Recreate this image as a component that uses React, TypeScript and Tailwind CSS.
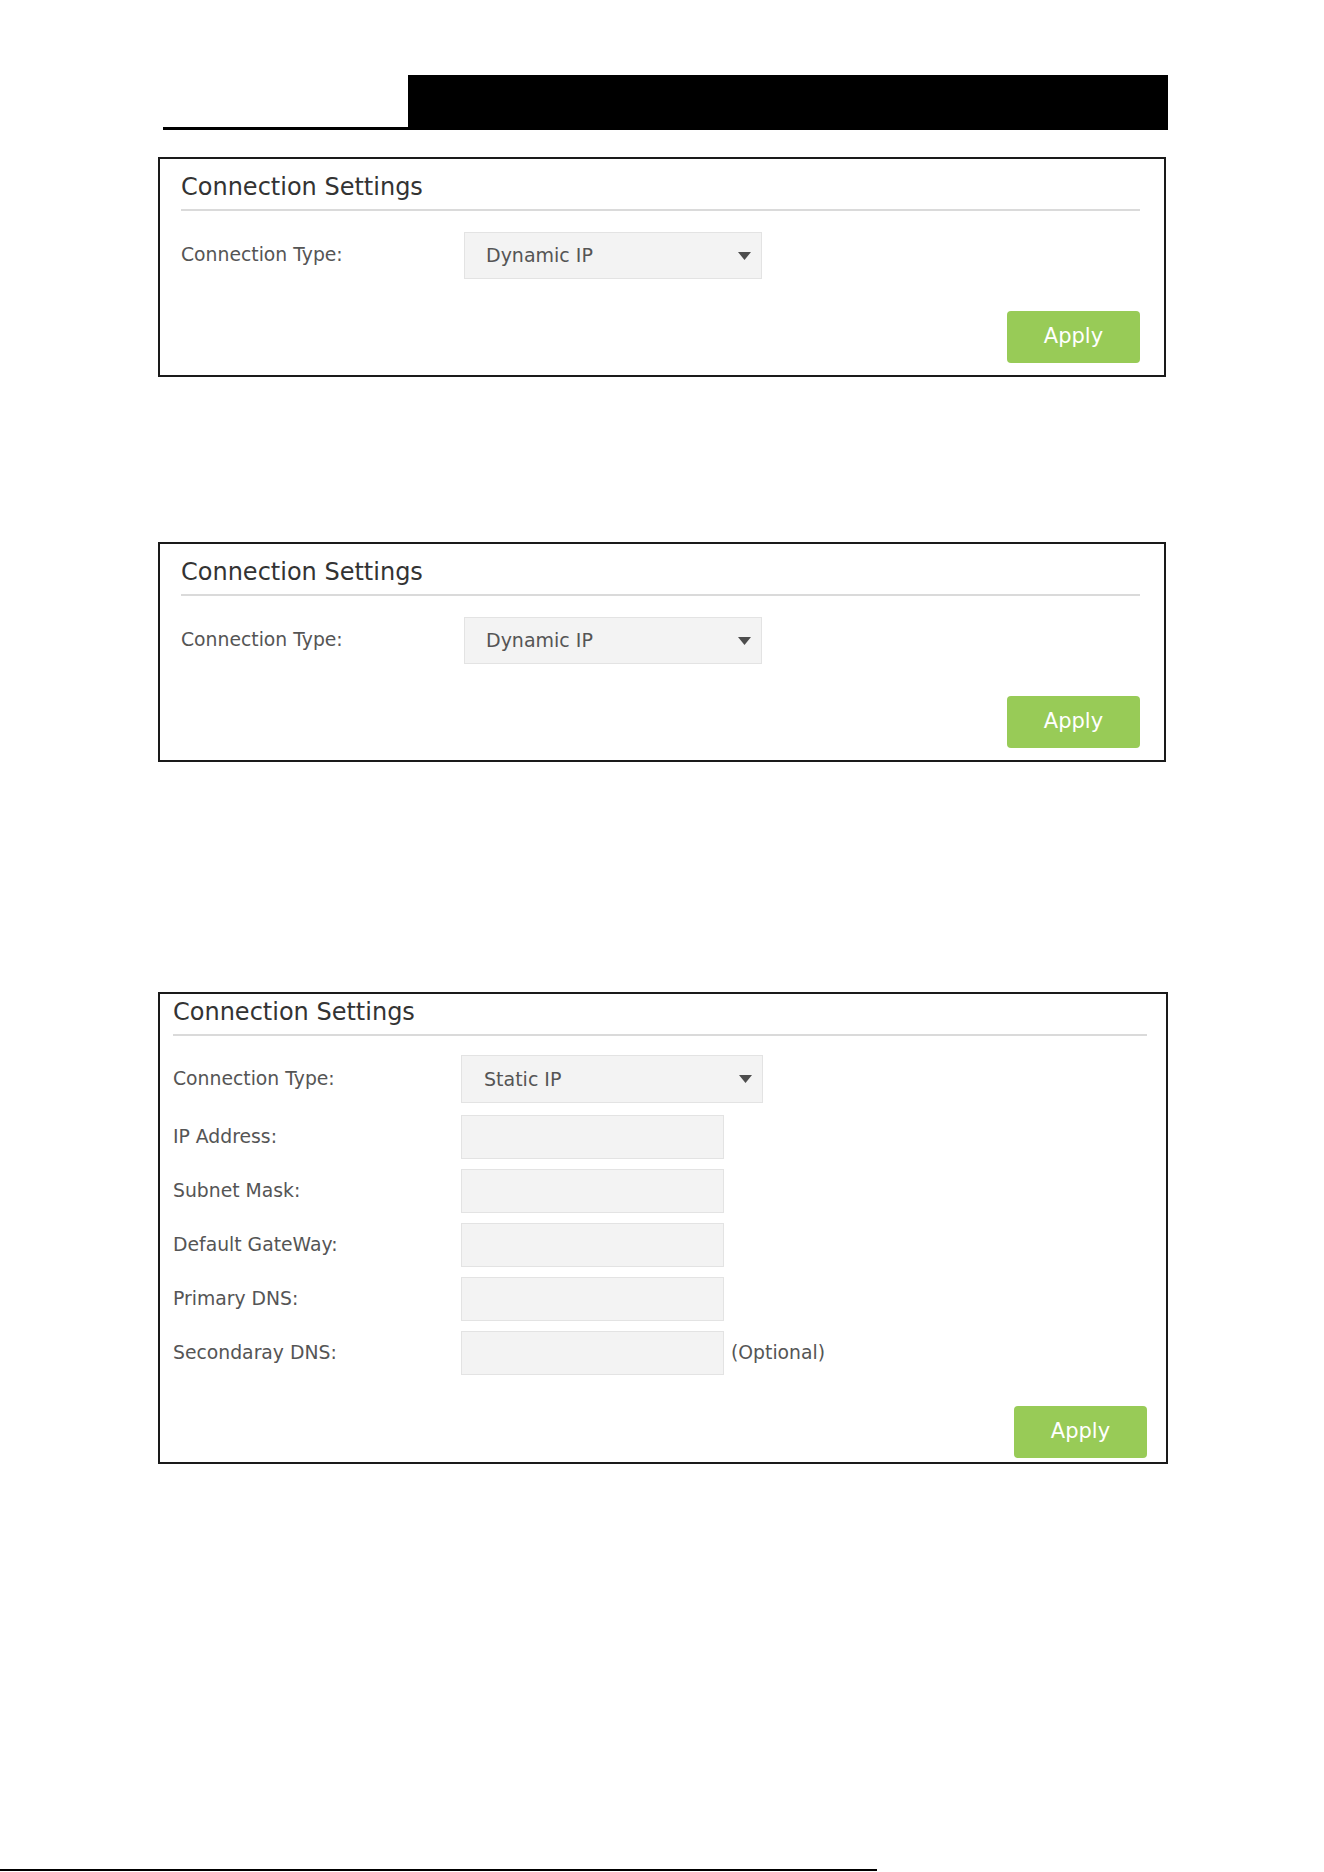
import React from "react";

type Field = { label: string; note?: string };

const staticFields: Field[] = [
  { label: "IP Address:" },
  { label: "Subnet Mask:" },
  { label: "Default GateWay:" },
  { label: "Primary DNS:" },
  { label: "Secondaray DNS:", note: "(Optional)" },
];

function Caret() {
  return (
    <svg width="13" height="8" viewBox="0 0 13 8" className="shrink-0">
      <polygon points="0,0 13,0 6.5,8" fill="#4d4d4d" />
    </svg>
  );
}

function SelectBox({ value, textPad }: { value: string; textPad: string }) {
  return (
    <div
      className={`flex items-center justify-between w-[298px] h-[47px] bg-[#f3f3f3] border border-[#e3e3e3] pr-[10px] ${textPad}`}
    >
      <span className="text-[19px] text-[#555]">{value}</span>
      <Caret />
    </div>
  );
}

function ApplyButton() {
  return (
    <button className="w-[133px] h-[52px] rounded-[4px] bg-[#98cb57] text-white text-[21px] font-['DejaVu_Sans',sans-serif]">
      Apply
    </button>
  );
}

// Dynamic IP panel
function DynamicPanel({ className = "" }: { className?: string }) {
  return (
    <section
      className={`w-[1008px] h-[220px] border-2 border-[#1a1a1a] pl-[21px] pr-[24px] flex flex-col ${className}`}
    >
      <h2 className="pt-[14px] text-[24px] leading-[29px] text-[#333] font-normal">
        Connection Settings
      </h2>
      <div className="mt-[7px] h-[2px] bg-[#dadada]" />
      <div className="mt-[21px] flex items-center">
        <span className="w-[283px] text-[18.8px] text-[#555]">Connection Type:</span>
        <SelectBox value="Dynamic IP" textPad="pl-[21px]" />
      </div>
      <div className="mt-[32px] flex justify-end">
        <ApplyButton />
      </div>
    </section>
  );
}

// Static IP panel with address fields
function StaticPanel() {
  return (
    <section className="mt-[230px] w-[1010px] h-[472px] border-2 border-[#1a1a1a] pl-[13px] pr-[19px] flex flex-col">
      <h2 className="pt-[4px] text-[24px] leading-[29px] text-[#333] font-normal">
        Connection Settings
      </h2>
      <div className="mt-[7px] h-[2px] bg-[#dadada]" />
      <div className="mt-[19px] flex items-center">
        <span className="w-[288px] text-[18.8px] text-[#555]">Connection Type:</span>
        <div className="w-[302px] h-[48px]">
          <div className="flex items-center justify-between w-full h-full bg-[#f3f3f3] border border-[#e3e3e3] pl-[22px] pr-[10px]">
            <span className="text-[19px] text-[#555]">Static IP</span>
            <Caret />
          </div>
        </div>
      </div>
      <div className="mt-[12px] flex flex-col gap-[10px]">
        {staticFields.map((f) => (
          <div key={f.label} className="flex items-center">
            <span className="w-[288px] text-[18.8px] text-[#555]">{f.label}</span>
            <div className="w-[263px] h-[44px] bg-[#f3f3f3] border border-[#e3e3e3]" />
            {f.note && (
              <span className="ml-[7px] text-[18.8px] text-[#555]">{f.note}</span>
            )}
          </div>
        ))}
      </div>
      <div className="mt-[31px] flex justify-end">
        <ApplyButton />
      </div>
    </section>
  );
}

export default function App() {
  return (
    <div className="w-[1324px] h-[1872px] bg-white flex flex-col font-['DejaVu_Sans',sans-serif]">
      {/* page header strip */}
      <div className="mt-[75px] ml-[163px] flex items-end">
        <div className="w-[245px] h-[3px] bg-black" />
        <div className="w-[760px] h-[55px] bg-black" />
      </div>

      <div className="ml-[158px] mt-[27px] flex flex-col">
        <DynamicPanel />
        <DynamicPanel className="mt-[165px]" />
        <StaticPanel />
      </div>

      {/* footer rule */}
      <div className="mt-auto mb-[1px] w-[877px] h-[2px] bg-black" />
    </div>
  );
}
